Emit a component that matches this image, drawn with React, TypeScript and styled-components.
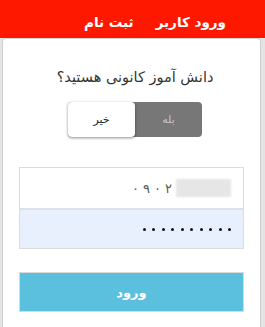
import styled, { createGlobalStyle } from "styled-components"

const Global = createGlobalStyle`
   html, body {
      margin: 0;
      padding: 0;
      background: #e4e4e4;
      font-family: "DejaVu Sans", "Noto Sans", sans-serif;
   }
   * { box-sizing: border-box; }
`

const Page = styled.div`
   width: 265px;
   height: 327px;
   overflow: hidden;
   display: flex;
   flex-direction: column;
`

const Header = styled.nav`
   height: 38px;
   flex: none;
   background: #ff1800;
   display: flex;
   flex-direction: row-reverse;
   align-items: flex-end;
   gap: 22px;
   padding: 0 39px 8px 0;
`

const NavLink = styled.a`
   color: #fff;
   font-size: 13.5px;
   font-weight: bold;
   direction: rtl;
   text-decoration: none;
   line-height: 16px;
`

const Card = styled.main`
   flex: 1;
   margin: 0 4px 0 2px;
   background: #fff;
   border: 1px solid #cfcfcf;
   border-bottom: none;
   border-radius: 4px 4px 0 0;
   padding: 28px 16px 0;
   direction: rtl;
`

const Ask = styled.div`
   display: flex;
   flex-direction: column;
   align-items: center;
   gap: 15px;
   padding-left: 7px;
`

const Title = styled.h2`
   margin: 0;
   font-size: 14.5px;
   font-weight: normal;
   color: #333;
   line-height: 20px;
`

const Toggle = styled.div`
   width: 134px;
   height: 35px;
   background: #777;
   border-radius: 4px;
   display: grid;
   grid-template-columns: 1fr 1fr;
`

const Option = styled.div<{ $on?: boolean }>`
   display: grid;
   place-items: center;
   font-size: 11px;
   color: ${p => (p.$on ? "#222" : "#c4c4c4")};
   background: ${p => (p.$on ? "#fff" : "transparent")};
   border-radius: 4px;
   box-shadow: ${p => (p.$on ? "0 1px 3px rgba(0,0,0,0.45)" : "none")};
`

const Fields = styled.div`
   margin-top: 30px;
   border: 1px solid #dcdcdc;
   display: flex;
   flex-direction: column;
`

const Field = styled.div<{ $filled?: boolean }>`
   height: 40px;
   display: flex;
   align-items: center;
   padding: 0 12px;
   background: ${p => (p.$filled ? "#e8f0fe" : "#fff")};
   & + & { border-top: 2px solid #dde0e6; }
`

const Phone = styled.span`
   display: flex;
   align-items: center;
   direction: ltr;
   gap: 4px;
   font-size: 13px;
   color: #555;
`

const Blur = styled.span`
   width: 55px;
   height: 18px;
   background: #e6e6e6;
   filter: blur(1px);
`

const Dots = styled.span`
   display: flex;
   gap: 6.5px;
`

const Dot = styled.span`
   width: 3px;
   height: 3px;
   border-radius: 50%;
   background: #111;
`

const Submit = styled.button`
   margin-top: 23px;
   width: 100%;
   height: 40px;
   background: #5bc0de;
   border: 1px solid #dadada;
   color: #fff;
   font-family: inherit;
   font-size: 13px;
   font-weight: bold;
`

export default function App() {
   return <Page>
      <Global />
      <Header>
         <NavLink>ورود کاربر</NavLink>
         <NavLink>ثبت نام</NavLink>
      </Header>
      <Card>
         <Ask>
            <Title>دانش آموز کانونی هستید؟</Title>
            <Toggle>
               <Option>بله</Option>
               <Option $on>خیر</Option>
            </Toggle>
         </Ask>
         <Fields>
            <Field>
               <Phone>
                  {"۰۹۰۲".split("").map((d, i) => <span key={i}>{d}</span>)}
                  <Blur />
               </Phone>
            </Field>
            <Field $filled>
               <Dots>
                  {Array.from({ length: 10 }, (_, i) => <Dot key={i} />)}
               </Dots>
            </Field>
         </Fields>
         <Submit>ورود</Submit>
      </Card>
   </Page>
}
